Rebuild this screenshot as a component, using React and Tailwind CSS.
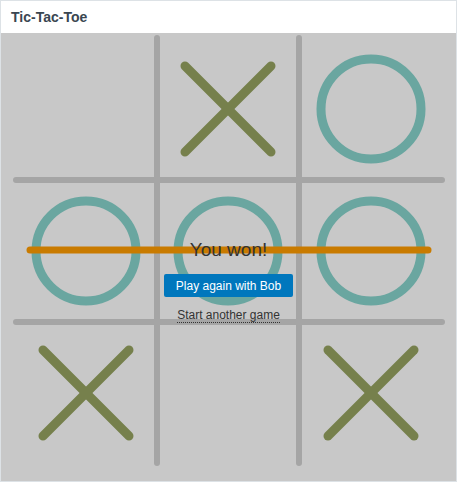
import React from 'react';

const board = [
  ['', 'X', 'O'],
  ['O', 'O', 'O'],
  ['X', '', 'X'],
];

// cell centres in page coordinates
const cx = [86, 228, 371];
const cy = [109, 251, 393];

function Mark({ type, x, y }) {
  if (type === 'X') {
    const d = 43;
    return (
      <g stroke="#76804c" strokeWidth={9} strokeLinecap="round">
        <line x1={x - d} y1={y - d} x2={x + d} y2={y + d} />
        <line x1={x + d} y1={y - d} x2={x - d} y2={y + d} />
      </g>
    );
  }
  if (type === 'O') {
    return <circle cx={x} cy={y} r={50} fill="none" stroke="#6aa6a0" strokeWidth={9} />;
  }
  return null;
}

export default function App() {
  return (
    <div className="w-[457px] h-[482px] border border-[#dde2e6] bg-white font-['Liberation_Sans',Arial,sans-serif]">
      {/* header */}
      <div className="h-[32px] flex items-center px-[10px]">
        <h1 className="text-[14px] font-bold text-[#3a4651]">Tic-Tac-Toe</h1>
      </div>

      {/* board */}
      <div className="relative h-[448px] bg-[#c8c8c8]">
        <svg width="455" height="448" viewBox="1 33 455 448" className="block">
          <g stroke="#a5a5a5" strokeWidth={6} strokeLinecap="round">
            <line x1={157} y1={38} x2={157} y2={463} />
            <line x1={299} y1={38} x2={299} y2={463} />
            <line x1={16} y1={180} x2={442} y2={180} />
            <line x1={16} y1={322} x2={442} y2={322} />
          </g>
          {board.map((row, r) =>
            row.map((v, c) => <Mark key={`${r}-${c}`} type={v} x={cx[c]} y={cy[r]} />)
          )}
          <line x1={30} y1={250} x2={428} y2={250} stroke="#c97b00" strokeWidth={7} strokeLinecap="round" />
        </svg>

        {/* result overlay */}
        <div className="absolute left-0 right-0 top-[204px] flex flex-col items-center">
          <div className="text-[19px] leading-[26px] text-[#333]">You won!</div>
          <button className="mt-[11px] h-[23px] w-[129px] rounded-[2px] bg-[#0077bd] text-[12px] text-white">
            Play again with Bob
          </button>
          <a className="mt-[11px] text-[12px] leading-[14px] text-[#333] border-b border-dotted border-[#333] cursor-pointer">
            Start another game
          </a>
        </div>
      </div>
    </div>
  );
}
